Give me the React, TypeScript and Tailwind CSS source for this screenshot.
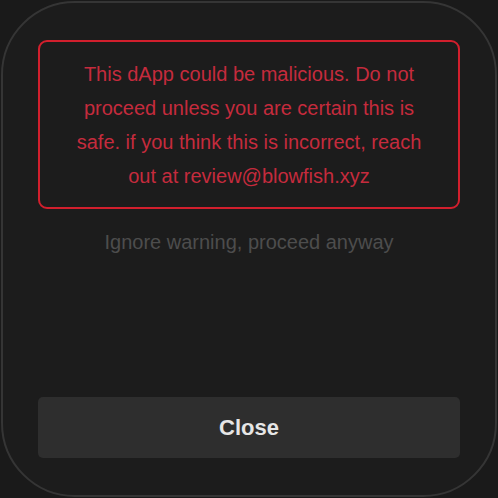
export default function App() {
  return (
    <div className="w-[498px] h-[498px] bg-[#1a1a1a] p-[1px] font-['Liberation_Sans',Arial,sans-serif]">
      <div className="h-full flex flex-col rounded-[74px] border-2 border-[#353535] bg-[#1c1c1c] px-[35px] pt-[37px] pb-[37px]">
        {/* Warning box */}
        <div className="h-[169px] flex items-center justify-center rounded-[9px] border-2 border-[#d21f2d] px-[22px]">
          <p className="text-center text-[20px] leading-[34px] text-[#c52b3d]">
            This dApp could be malicious. Do not proceed unless you are certain this is safe. if you think this
            is incorrect, reach out at review@blowfish.xyz
          </p>
        </div>

        <button className="mt-[16px] text-center text-[20px] leading-[34px] text-[#4d4d4d]">
          Ignore warning, proceed anyway
        </button>

        <div className="flex-1" />

        <button className="h-[61px] w-full rounded-[5px] bg-[#2e2e2e] text-[22px] font-bold text-[#e6e6e6]">
          Close
        </button>
      </div>
    </div>
  )
}
